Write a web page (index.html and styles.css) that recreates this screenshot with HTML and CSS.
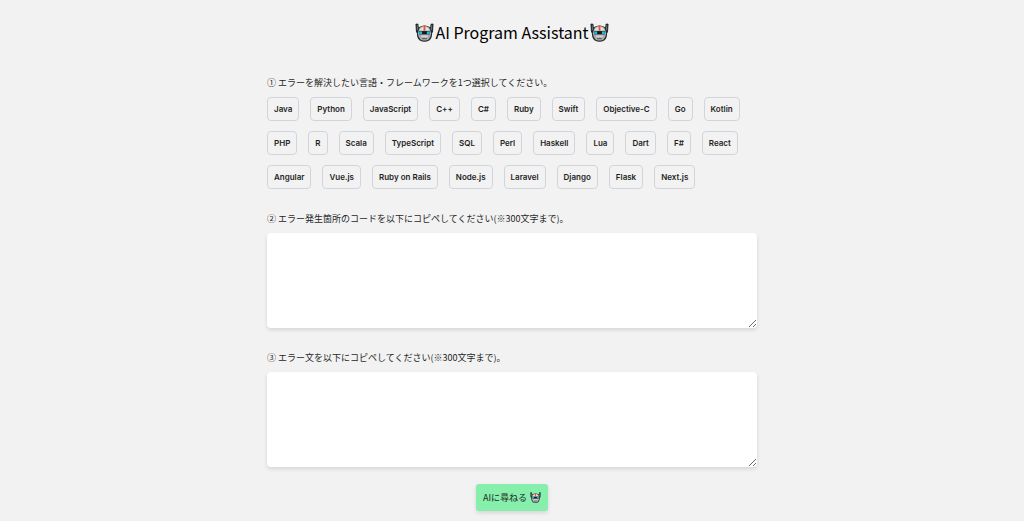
FILE: index.html
```html
<!DOCTYPE html>
<html lang="ja">
<head>
  <meta charset="UTF-8">
  <title>AI Program Assistant</title>
  <meta name="viewport" content="width=device-width, initial-scale=1.0">
  <link rel="stylesheet" href="styles.css">
</head>
<body>

  <!-- Robot icon, shared by the title and the submit button -->
  <svg class="sprite" aria-hidden="true">
    <symbol id="robot" viewBox="0 0 40 40">
      <path d="M1 2Q4 0 7 2L8 9Q20 1 32 9L33 2Q36 0 39 2L38 18L36 22Q36 32 30 37Q20 42 10 37Q4 32 4 22L2 18z" fill="#24282b"/>
      <path d="M4 4h1l1 9-2 3zM36 4h-1l-1 9 2 3z" fill="#8c9698"/>
      <path d="M8 14Q10 7 20 6Q30 7 32 14L34 22Q33 31 28 35Q20 39 12 35Q7 31 6 22z" fill="#a9acae"/>
      <path d="M11 12Q14 8 20 8Q26 8 29 12L30 16H10z" fill="#e4e4e2"/>
      <path d="M18 5h4v11h-4z" fill="#f0522f"/>
      <path d="M9 17h22v7H9z" fill="#14191c"/>
      <path d="M9 18h6v5H9zM25 18h6v5h-6z" fill="#18bce4"/>
      <path d="M13 26h14v4H13z" fill="#d2d3d3"/>
      <path d="M15 32h10v2H15z" fill="#4b5154"/>
    </symbol>
  </svg>

  <header>
    <h1>
      <svg class="title-icon" aria-hidden="true"><use href="#robot"/></svg>
      <span>AI Program Assistant</span>
      <svg class="title-icon" aria-hidden="true"><use href="#robot"/></svg>
    </h1>
  </header>

  <main>
    <form>
      <section class="question">
        <p class="question-label" id="languageLabel">① エラーを解決したい言語・フレームワークを1つ選択してください。</p>
        <div class="languages" role="group" aria-labelledby="languageLabel">
          <button type="button">Java</button>
          <button type="button">Python</button>
          <button type="button">JavaScript</button>
          <button type="button">C++</button>
          <button type="button">C#</button>
          <button type="button">Ruby</button>
          <button type="button">Swift</button>
          <button type="button">Objective-C</button>
          <button type="button">Go</button>
          <button type="button">Kotlin</button>
          <button type="button">PHP</button>
          <button type="button">R</button>
          <button type="button">Scala</button>
          <button type="button">TypeScript</button>
          <button type="button">SQL</button>
          <button type="button">Perl</button>
          <button type="button">Haskell</button>
          <button type="button">Lua</button>
          <button type="button">Dart</button>
          <button type="button">F#</button>
          <button type="button">React</button>
          <button type="button">Angular</button>
          <button type="button">Vue.js</button>
          <button type="button">Ruby on Rails</button>
          <button type="button">Node.js</button>
          <button type="button">Laravel</button>
          <button type="button">Django</button>
          <button type="button">Flask</button>
          <button type="button">Next.js</button>
        </div>
      </section>

      <section class="question">
        <label class="question-label" for="code">② エラー発生箇所のコードを以下にコピペしてください(※300文字まで)。</label>
        <textarea id="code" maxlength="300"></textarea>
      </section>

      <section class="question">
        <label class="question-label" for="error">③ エラー文を以下にコピペしてください(※300文字まで)。</label>
        <textarea id="error" maxlength="300"></textarea>
      </section>

      <button class="ask-btn" type="submit">
        <span>AIに尋ねる</span>
        <svg class="ask-icon" aria-hidden="true"><use href="#robot"/></svg>
      </button>
    </form>
  </main>

</body>
</html>
```
FILE: styles.css
```css
* {
  box-sizing: border-box;
}
body {
  font-family: "Noto Sans CJK JP", sans-serif;
  margin: 0;
  background: #f2f2f2;
  color: #1f1f1f;
}
button, textarea {
  font-family: inherit;
  color: inherit;
}
.sprite {
  display: none;
}
h1 {
  display: flex;
  justify-content: center;
  align-items: center;
  gap: 1px;
  margin: 0;
  padding-top: 20px;
  color: #000;
  font-size: 16px;
  font-weight: 400;
  line-height: 24px;
}
.title-icon {
  width: 19px;
  height: 19px;
}
main {
  max-width: 506px;
  margin: 0 auto;
  padding: 32px 8px 9px;
}
.question {
  margin-bottom: 23px;
}
.question-label {
  display: block;
  margin: 0 0 7px;
  font-size: 9px;
  line-height: 14px;
}
.languages {
  display: flex;
  flex-wrap: wrap;
  gap: 10px 11px;
}
.languages button {
  height: 24px;
  padding: 0 6px;
  border: 1px solid #d1d5db;
  border-radius: 4px;
  background: transparent;
  font-family: Inter, sans-serif;
  font-size: 8px;
  font-weight: 600;
  cursor: pointer;
}
textarea {
  display: block;
  width: 100%;
  height: 95px;
  padding: 8px;
  border: none;
  border-radius: 4px;
  background: white;
  box-shadow: 0 2px 4px rgba(0, 0, 0, 0.12);
  font-size: 9px;
  resize: vertical;
}
.ask-btn {
  display: flex;
  align-items: center;
  gap: 3px;
  height: 27px;
  margin: -6px auto 0;
  padding: 0 7px;
  border: none;
  border-radius: 3px;
  background: #86efac;
  box-shadow: 0 2px 4px rgba(0, 0, 0, 0.12);
  font-size: 9px;
  cursor: pointer;
}
.ask-icon {
  width: 11px;
  height: 11px;
}
```
